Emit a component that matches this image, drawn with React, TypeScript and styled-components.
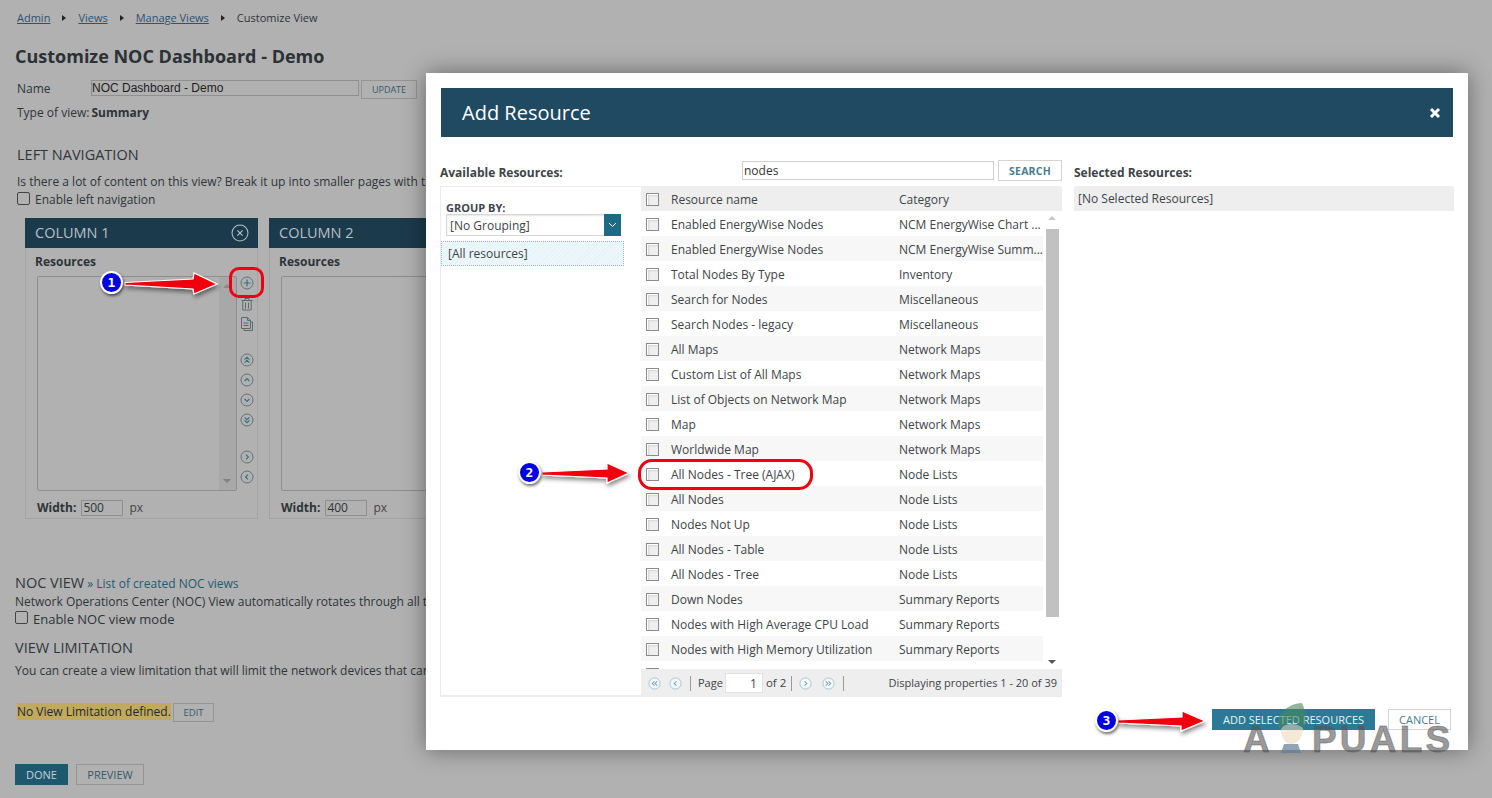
import React from "react";
import styled, { createGlobalStyle } from "styled-components";

const Global = createGlobalStyle`
  html, body { margin: 0; padding: 0; background: #b1b1b1; }
  * { box-sizing: border-box; }
`;

const Page = styled.div`
  position: relative;
  width: 1492px;
  height: 798px;
  overflow: hidden;
  background: #b1b1b1;
  color: #2e3438;
  font: 12px/16px "Open Sans", sans-serif;
`;

const Back = styled.div`
  display: flex;
  flex-direction: column;
  width: 1492px;
  padding: 10px 0 0 17px;
`;

const Crumbs = styled.nav`
  display: flex;
  align-items: center;
  height: 16px;
  font-size: 11px;
`;
const CrumbLink = styled.a`
  color: #2f5270;
  text-decoration: underline;
`;
const CrumbArrow = styled.span`
  width: 0;
  height: 0;
  margin: 0 12px 0 12px;
  border-left: 4px solid #222;
  border-top: 3px solid transparent;
  border-bottom: 3px solid transparent;
`;

const Title = styled.h1`
  margin: 18px 0 0 -2px;
  font-size: 18px;
  line-height: 24px;
  font-weight: 700;
  color: #2b3135;
`;

const NameRow = styled.div`
  display: flex;
  align-items: flex-start;
  height: 19px;
  margin-top: 12px;
`;
const NameLabel = styled.span`
  width: 74px;
  line-height: 17px;
`;
const NameInput = styled.div`
  width: 268px;
  height: 16px;
  border: 1px solid #8f8f8f;
  font: 12px/14px "Liberation Sans", sans-serif;
  color: #1d1d1d;
  white-space: nowrap;
`;
const GhostButton = styled.div<{ $w: number; $h: number; $size: number }>`
  display: flex;
  align-items: center;
  justify-content: center;
  width: ${(p) => p.$w}px;
  height: ${(p) => p.$h}px;
  flex: none;
  border: 1px solid #949494;
  font-size: ${(p) => p.$size}px;
  color: #34596b;
`;
const UpdateButton = styled(GhostButton)`
  margin-left: 2px;
`;
const TypeRow = styled.div`
  margin-top: 6px;
  height: 16px;
  white-space: nowrap;
`;
const Strong = styled.b`
  font-weight: 700;
  margin-left: 2px;
`;
const SectionTitle = styled.h2<{ $top: number; $left?: number }>`
  margin: ${(p) => p.$top}px 0 0 ${(p) => p.$left ?? 0}px;
  font-size: 14.5px;
  line-height: 20px;
  font-weight: 400;
  color: #30363a;
  white-space: nowrap;
`;
const Para = styled.p<{ $top: number; $left?: number }>`
  margin: ${(p) => p.$top}px 0 0 ${(p) => p.$left ?? 0}px;
  white-space: nowrap;
  height: 16px;
`;
const CheckRow = styled.label<{ $left?: number; $size?: number; $top?: number }>`
  display: flex;
  align-items: center;
  gap: 5px;
  height: 16px;
  margin: ${(p) => p.$top ?? 2}px 0 0 ${(p) => p.$left ?? 0}px;
  font-size: ${(p) => p.$size ?? 12}px;
  white-space: nowrap;
`;
const PlainCheck = styled.span`
  width: 13px;
  height: 13px;
  border: 1px solid #444;
  border-radius: 2px;
  margin-top: -3px;
`;

const Columns = styled.div`
  display: flex;
  gap: 11px;
  margin: 10px 0 0 8px;
`;
const Column = styled.section`
  width: 233px;
  height: 301px;
  flex: none;
  border: 1px solid #a3a3a3;
  border-top: 0;
`;
const ColumnHead = styled.header`
  display: flex;
  align-items: center;
  justify-content: space-between;
  height: 30px;
  margin: 0 -1px;
  padding: 0 9px 0 10px;
  background: #1b3a4c;
  color: #b5c0c6;
  font-size: 14.5px;
`;
const ColumnLabel = styled.div`
  margin: 6px 0 0 9px;
  font-weight: 700;
  height: 16px;
`;
const ColumnBody = styled.div`
  display: flex;
  margin: 6px 0 0 11px;
`;
const ListBox = styled.div`
  display: flex;
  justify-content: flex-end;
  width: 200px;
  height: 215px;
  border: 1px solid #8e8e8e;
  border-radius: 2px;
`;
const ListScroll = styled.div`
  position: relative;
  width: 17px;
  background: #a8a8a8;
`;
const ScrollTri = styled.span<{ $down?: boolean; $color?: string; $pos: number; $left?: number }>`
  position: absolute;
  left: ${(p) => p.$left ?? 4}px;
  ${(p) => (p.$down ? `bottom: ${p.$pos}px;` : `top: ${p.$pos}px;`)}
  width: 0;
  height: 0;
  border-left: 4px solid transparent;
  border-right: 4px solid transparent;
  ${(p) => (p.$down ? "border-top" : "border-bottom")}: 4px solid ${(p) => p.$color ?? "#808080"};
`;
const IconRail = styled.div`
  display: flex;
  flex-direction: column;
  align-items: center;
  width: 19px;
`;
const RailIcon = styled.svg<{ $top?: number }>`
  display: block;
  width: 14px;
  height: 14px;
  margin-top: ${(p) => p.$top ?? 0}px;
  flex: none;
`;
const CloseRound = styled.svg`
  display: block;
  width: 18px;
  height: 18px;
  flex: none;
`;
const WidthRow = styled.div`
  display: flex;
  align-items: center;
  height: 18px;
  margin: 8px 0 0 11px;
  white-space: nowrap;
`;
const WidthLabel = styled.b`
  font-weight: 700;
  margin-right: 5px;
`;
const WidthInput = styled.div`
  width: 42px;
  height: 16px;
  padding-left: 1px;
  border: 1px solid #8e8e8e;
  line-height: 14px;
`;
const Px = styled.span`
  margin-left: 6px;
  color: #444;
`;

const NocTitle = styled.div`
  display: flex;
  align-items: baseline;
  margin: 54px 0 0 -2px;
  height: 20px;
  font-size: 14.5px;
  line-height: 20px;
  color: #30363a;
`;
const NocLink = styled.a`
  margin-left: 3px;
  font-size: 12px;
  color: #235a70;
`;
const LimitRow = styled.div`
  display: flex;
  align-items: flex-start;
  margin-top: 24px;
  height: 20px;
`;
const LimitTag = styled.span`
  display: block;
  width: 154px;
  height: 17px;
  background: #c1aa60;
  line-height: 17px;
  color: #23282a;
  white-space: nowrap;
  flex: none;
`;
const EditButton = styled(GhostButton)`
  margin: 0 0 0 2px;
`;
const BackActions = styled.div`
  display: flex;
  gap: 8px;
  margin: 41px 0 0 -2px;
`;
const DoneButton = styled.div`
  display: flex;
  align-items: center;
  justify-content: center;
  width: 53px;
  height: 21px;
  background: #1e586f;
  color: #c5d2d8;
  font-size: 11px;
`;

/* Modal */
const Modal = styled.div`
  position: absolute;
  left: 426px;
  top: 73px;
  width: 1042px;
  height: 677px;
  padding: 15px 0 0 14px;
  background: #fff;
  box-shadow: 0 0 22px rgba(0, 0, 0, 0.42);
  color: #3d4448;
`;
const ModalHead = styled.header`
  display: flex;
  align-items: center;
  justify-content: space-between;
  width: 1012px;
  height: 49px;
  margin-left: 1px;
  padding: 0 12px 0 21px;
  background: #204a62;
  color: #fff;
  font-size: 20px;
`;
const CloseGlyph = styled.svg`
  display: block;
  width: 12px;
  height: 12px;
`;
const ModalBody = styled.div`
  display: flex;
  gap: 12px;
  margin-top: 23px;
`;
const Available = styled.div`
  width: 622px;
  flex: none;
`;
const TopBar = styled.div`
  display: flex;
  align-items: flex-start;
  height: 26px;
`;
const FieldLabel = styled.b`
  display: block;
  font-weight: 700;
  font-size: 12px;
  line-height: 16px;
  padding-top: 5px;
  color: #3d4448;
`;
const BarLabel = styled(FieldLabel)`
  width: 302px;
  flex: none;
`;
const SearchInput = styled.div`
  width: 252px;
  height: 19px;
  margin-top: 1px;
  border: 1px solid #cfcfcf;
  padding-left: 1px;
  font-size: 12px;
  line-height: 18px;
  color: #333;
`;
const SearchButton = styled.div`
  display: flex;
  align-items: center;
  justify-content: center;
  width: 64px;
  height: 21px;
  margin-left: 4px;
  border: 1px solid #d4d4d4;
  font-size: 10.5px;
  font-weight: 700;
  letter-spacing: 0.2px;
  color: #4a7c8e;
`;
const Panel = styled.div`
  display: flex;
  height: 511px;
  border-bottom: 1px solid #ececec;
`;
const Side = styled.aside`
  width: 201px;
  flex: none;
  padding: 14px 0 0 0;
  border: 1px solid #ececec;
  border-right: 0;
`;
const SideLabel = styled.b`
  display: block;
  margin-left: 5px;
  font-size: 11px;
  line-height: 13px;
  font-weight: 700;
  color: #3d4448;
`;
const GroupSelect = styled.div`
  display: flex;
  justify-content: space-between;
  width: 175px;
  height: 22px;
  margin: 0 0 0 5px;
  border: 1px solid #d6d6d6;
  box-shadow: inset 0 1px 2px rgba(0, 0, 0, 0.1);
  font-size: 12px;
  line-height: 21px;
  padding-left: 3px;
`;
const SelectCaret = styled.span`
  display: flex;
  align-items: center;
  justify-content: center;
  width: 17px;
  background: #1e6a85;
  margin: -1px -1px -1px 0;
`;
const AllRes = styled.div`
  width: 183px;
  height: 25px;
  margin-top: 5px;
  padding-left: 6px;
  font-size: 12px;
  line-height: 24px;
  border: 1px dotted #86c3d2;
  background: repeating-linear-gradient(135deg, #e4f3f7 0 1px, #edf7fa 1px 3px);
`;
const GridWrap = styled.div`
  display: flex;
  flex-direction: column;
  width: 421px;
  flex: none;
`;
const GridHead = styled.div`
  display: grid;
  grid-template-columns: 25px 228px 1fr;
  align-items: center;
  height: 25px;
  background: #eeeeee;
  padding: 2px 0 0 5px;
  font-size: 12px;
`;
const GridMain = styled.div`
  display: flex;
  height: 459px;
  overflow: hidden;
`;
const Rows = styled.div`
  width: 402px;
  flex: none;
`;
const Row = styled.div<{ $odd: boolean }>`
  display: grid;
  grid-template-columns: 25px 228px 1fr;
  align-items: center;
  height: 25px;
  padding: 2px 0 0 5px;
  background: ${(p) => (p.$odd ? "#f7f7f7" : "#fff")};
  font-size: 12px;
  white-space: nowrap;
`;
const Cell = styled.span`
  padding-top: 1px;
  line-height: 16px;
`;
const BoxCheck = styled.span`
  display: block;
  width: 13px;
  height: 13px;
  border: 1px solid #8b8b8b;
  background: #efefef;
  box-shadow: inset 1px 1px 0 #fff, inset 2px 2px 2px #d4d4d4;
`;
const Scroll = styled.div`
  position: relative;
  flex: 1;
`;
const Thumb = styled.div`
  position: absolute;
  left: 3px;
  top: 18px;
  width: 13px;
  height: 388px;
  background: #c1c1c1;
`;
const GridFoot = styled.div`
  display: flex;
  align-items: center;
  height: 27px;
  padding: 1px 5px 0 7px;
  background: #eeeeee;
  font-size: 11px;
  white-space: nowrap;
`;
const PageIcon = styled.svg<{ $gap?: number }>`
  display: block;
  width: 13px;
  height: 13px;
  margin-right: ${(p) => p.$gap ?? 8}px;
  flex: none;
`;
const Sep = styled.span<{ $gap?: number }>`
  width: 1px;
  height: 15px;
  margin-right: ${(p) => p.$gap ?? 7}px;
  background: #9a9a9a;
  flex: none;
`;
const PageInput = styled.div`
  width: 38px;
  height: 20px;
  margin: 0 3px 0 2px;
  padding-right: 5px;
  background: #fff;
  border: 1px solid #e2e2e2;
  text-align: right;
  font-size: 12px;
  line-height: 20px;
`;
const PageOf = styled.span`
  margin-right: 5px;
  font-size: 11.5px;
`;
const Showing = styled.span`
  margin-left: auto;
`;
const Selected = styled.div`
  width: 380px;
  flex: none;
`;
const SelectedBand = styled.div`
  height: 25px;
  margin-top: 5px;
  padding-left: 4px;
  background: #eeeeee;
  font-size: 12px;
  line-height: 25px;
`;
const ModalFoot = styled.div`
  display: flex;
  gap: 13px;
  margin: 12px 0 0 772px;
`;
const AddButton = styled.div`
  display: flex;
  align-items: center;
  justify-content: center;
  width: 163px;
  height: 21px;
  background: #2a7a96;
  color: #e9f2f5;
  font-size: 11px;
`;
const CancelButton = styled.div`
  display: flex;
  align-items: center;
  justify-content: center;
  width: 63px;
  height: 21px;
  border: 1px solid #d4d4d4;
  color: #4a7c8e;
  font-size: 11px;
`;

/* Overlays */
const Canvas = styled.svg`
  position: absolute;
  left: 0;
  top: 0;
  width: 1492px;
  height: 798px;
  pointer-events: none;
`;
const Badge = styled.div<{ $x: number; $y: number }>`
  position: absolute;
  left: ${(p) => p.$x - 12}px;
  top: ${(p) => p.$y - 12}px;
  display: flex;
  align-items: center;
  justify-content: center;
  width: 23px;
  height: 23px;
  border-radius: 50%;
  background: #0000e0;
  border: 2px solid #fff;
  box-shadow: 1px 2px 3px rgba(0, 0, 0, 0.55);
  color: #fff;
  font: 700 13px/1 "DejaVu Sans Mono", monospace;
`;
const Ring = styled.div<{ $x: number; $y: number; $w: number; $h: number; $r: number }>`
  position: absolute;
  left: ${(p) => p.$x}px;
  top: ${(p) => p.$y}px;
  width: ${(p) => p.$w}px;
  height: ${(p) => p.$h}px;
  border: 3px solid #ee0010;
  border-radius: ${(p) => p.$r}px;
`;
const Mark = styled.div`
  position: absolute;
  left: 1243px;
  top: 705px;
  display: flex;
  align-items: flex-end;
  height: 50px;
  pointer-events: none;
`;
const MarkText = styled.span`
  font: 700 37px/31px "Liberation Sans", sans-serif;
  letter-spacing: 3.2px;
  color: rgba(85, 85, 85, 0.6);
  -webkit-text-stroke: 1px rgba(85, 85, 85, 0.45);
`;
const MarkHead = styled.svg`
  display: block;
  width: 42px;
  height: 50px;
  margin: 0 0 2px -3px;
  flex: none;
`;

const resources: [string, string][] = [
  ["Enabled EnergyWise Nodes", "NCM EnergyWise Chart ..."],
  ["Enabled EnergyWise Nodes", "NCM EnergyWise Summ..."],
  ["Total Nodes By Type", "Inventory"],
  ["Search for Nodes", "Miscellaneous"],
  ["Search Nodes - legacy", "Miscellaneous"],
  ["All Maps", "Network Maps"],
  ["Custom List of All Maps", "Network Maps"],
  ["List of Objects on Network Map", "Network Maps"],
  ["Map", "Network Maps"],
  ["Worldwide Map", "Network Maps"],
  ["All Nodes - Tree (AJAX)", "Node Lists"],
  ["All Nodes", "Node Lists"],
  ["Nodes Not Up", "Node Lists"],
  ["All Nodes - Table", "Node Lists"],
  ["All Nodes - Tree", "Node Lists"],
  ["Down Nodes", "Summary Reports"],
  ["Nodes with High Average CPU Load", "Summary Reports"],
  ["Nodes with High Memory Utilization", "Summary Reports"],
  ["Nodes with High Packet Loss", "Summary Reports"],
];

const glyphs: Record<string, string> = {
  plus: "M7 3.6V10.4M3.6 7H10.4",
  close: "M5 5L9 9M9 5L5 9",
  up: "M4.6 8L7 5.6L9.4 8",
  down: "M4.6 6L7 8.4L9.4 6",
  top: "M4.6 6.6L7 4.4L9.4 6.6M4.6 9.6L7 7.4L9.4 9.6",
  bottom: "M4.6 4.4L7 6.6L9.4 4.4M4.6 7.4L7 9.6L9.4 7.4",
  right: "M6 4.6L8.4 7L6 9.4",
  left: "M8 4.6L5.6 7L8 9.4",
  first: "M7 4.6L4.6 7L7 9.4M10 4.6L7.6 7L10 9.4",
  prev: "M8 4.6L5.6 7L8 9.4",
  next: "M6 4.6L8.4 7L6 9.4",
  last: "M4 4.6L6.4 7L4 9.4M7 4.6L9.4 7L7 9.4",
};

function Round({ name, top }: { name: string; top?: number }) {
  return (
    <RailIcon viewBox="0 0 14 14" $top={top}>
      <circle cx="7" cy="7" r="6" fill="none" stroke="#667077" strokeWidth="1" />
      <path d={glyphs[name]} fill="none" stroke="#2f7286" strokeWidth="1.2" />
    </RailIcon>
  );
}

function Trash() {
  return (
    <RailIcon viewBox="0 0 14 14" $top={7}>
      <path d="M1.5 3.5H12.5M5 3V1.5H9V3M2.8 4V13H11.2V4M5.5 5.5V11.5M8.5 5.5V11.5" fill="none" stroke="#5f6a70" strokeWidth="1" />
    </RailIcon>
  );
}

function Doc() {
  return (
    <RailIcon viewBox="0 0 14 14" $top={6}>
      <path d="M1.5 .5H7.5L10.5 3.5V11.5H1.5ZM7.5 .5V3.5H10.5M10.5 5H12.5V13.5H4V11.5" fill="none" stroke="#5f6a70" strokeWidth="1" />
      <path d="M3.5 6H8.5M3.5 8.5H8.5" stroke="#2f7286" strokeWidth="1" />
    </RailIcon>
  );
}

function PageBtn({ name, gap }: { name: string; gap?: number }) {
  return (
    <PageIcon viewBox="0 0 14 14" $gap={gap}>
      <circle cx="7" cy="7" r="6" fill="#f3f8fa" stroke="#a3c3cf" strokeWidth="1" />
      <path d={glyphs[name]} fill="none" stroke="#6ea3b6" strokeWidth="1.1" />
    </PageIcon>
  );
}

function ResourceColumn({ title, width, active }: { title: string; width: string; active?: boolean }) {
  return (
    <Column>
      <ColumnHead>
        {title}
        {active && (
          <CloseRound viewBox="0 0 14 14">
            <circle cx="7" cy="7" r="6.2" fill="none" stroke="#b5c0c6" strokeWidth="0.8" />
            <path d={glyphs.close} stroke="#b5c0c6" strokeWidth="0.9" />
          </CloseRound>
        )}
      </ColumnHead>
      <ColumnLabel>Resources</ColumnLabel>
      <ColumnBody>
        <ListBox>
          <ListScroll>
            <ScrollTri $pos={7} $color="#8a8a8a" />
            <ScrollTri $down $pos={7} />
          </ListScroll>
        </ListBox>
        <IconRail>
          <Round name="plus" top={0} />
          <Trash />
          <Doc />
          <Round name="top" top={22} />
          <Round name="up" top={6} />
          <Round name="down" top={6} />
          <Round name="bottom" top={6} />
          <Round name="right" top={23} />
          <Round name="left" top={6} />
        </IconRail>
      </ColumnBody>
      <WidthRow>
        <WidthLabel>Width:</WidthLabel>
        <WidthInput>{width}</WidthInput>
        <Px>px</Px>
      </WidthRow>
    </Column>
  );
}

export default function App() {
  return (
    <Page>
      <Global />
      <Back>
        <Crumbs>
          <CrumbLink>Admin</CrumbLink>
          <CrumbArrow />
          <CrumbLink>Views</CrumbLink>
          <CrumbArrow />
          <CrumbLink>Manage Views</CrumbLink>
          <CrumbArrow />
          <span>Customize View</span>
        </Crumbs>
        <Title>Customize NOC Dashboard - Demo</Title>
        <NameRow>
          <NameLabel>Name</NameLabel>
          <NameInput>NOC Dashboard - Demo</NameInput>
          <UpdateButton $w={56} $h={19} $size={9}>UPDATE</UpdateButton>
        </NameRow>
        <TypeRow>
          Type of view:<Strong>Summary</Strong>
        </TypeRow>
        <SectionTitle $top={24}>LEFT NAVIGATION</SectionTitle>
        <Para $top={9}>Is there a lot of content on this view? Break it up into smaller pages with tabs.</Para>
        <CheckRow>
          <PlainCheck />
          Enable left navigation
        </CheckRow>
        <Columns>
          <ResourceColumn title="COLUMN 1" width="500" active />
          <ResourceColumn title="COLUMN 2" width="400" />
        </Columns>
        <NocTitle>
          NOC VIEW
          <NocLink>» List of created NOC views</NocLink>
        </NocTitle>
        <Para $top={1} $left={-2}>Network Operations Center (NOC) View automatically rotates through all tabs.</Para>
        <CheckRow $left={-2} $size={13} $top={1}>
          <PlainCheck />
          Enable NOC view mode
        </CheckRow>
        <SectionTitle $top={11} $left={-2}>VIEW LIMITATION</SectionTitle>
        <Para $top={5} $left={-2}>You can create a view limitation that will limit the network devices that can be seen.</Para>
        <LimitRow>
          <LimitTag>No View Limitation defined.</LimitTag>
          <EditButton $w={41} $h={19} $size={9.5}>EDIT</EditButton>
        </LimitRow>
        <BackActions>
          <DoneButton>DONE</DoneButton>
          <GhostButton $w={68} $h={21} $size={11}>PREVIEW</GhostButton>
        </BackActions>
      </Back>

      <Modal>
        <ModalHead>
          Add Resource
          <CloseGlyph viewBox="0 0 12 12">
            <path d="M2 2L10 10M10 2L2 10" stroke="#fff" strokeWidth="3" />
          </CloseGlyph>
        </ModalHead>
        <ModalBody>
          <Available>
            <TopBar>
              <BarLabel>Available Resources:</BarLabel>
              <SearchInput>nodes</SearchInput>
              <SearchButton>SEARCH</SearchButton>
            </TopBar>
            <Panel>
              <Side>
                <SideLabel>GROUP BY:</SideLabel>
                <GroupSelect>
                  [No Grouping]
                  <SelectCaret>
                    <svg width="9" height="6" viewBox="0 0 9 6">
                      <path d="M1 1L4.5 4.5L8 1" fill="none" stroke="#fff" strokeWidth="1" />
                    </svg>
                  </SelectCaret>
                </GroupSelect>
                <AllRes>[All resources]</AllRes>
              </Side>
              <GridWrap>
                <GridHead>
                  <BoxCheck />
                  <Cell>Resource name</Cell>
                  <Cell>Category</Cell>
                </GridHead>
                <GridMain>
                  <Rows>
                    {resources.map(([name, cat], i) => (
                      <Row key={i} $odd={i % 2 === 1}>
                        <BoxCheck />
                        <Cell>{name}</Cell>
                        <Cell>{cat}</Cell>
                      </Row>
                    ))}
                  </Rows>
                  <Scroll>
                    <ScrollTri $pos={5} $left={5} $color="#c8c8c8" />
                    <Thumb />
                    <ScrollTri $down $pos={5} $left={5} $color="#555" />
                  </Scroll>
                </GridMain>
                <GridFoot>
                  <PageBtn name="first" />
                  <PageBtn name="prev" />
                  <Sep />
                  <span>Page</span>
                  <PageInput>1</PageInput>
                  <PageOf>of 2</PageOf>
                  <Sep $gap={7} />
                  <PageBtn name="next" gap={10} />
                  <PageBtn name="last" gap={8} />
                  <Sep />
                  <Showing>Displaying properties 1 - 20 of 39</Showing>
                </GridFoot>
              </GridWrap>
            </Panel>
          </Available>
          <Selected>
            <FieldLabel>Selected Resources:</FieldLabel>
            <SelectedBand>[No Selected Resources]</SelectedBand>
          </Selected>
        </ModalBody>
        <ModalFoot>
          <AddButton>ADD SELECTED RESOURCES</AddButton>
          <CancelButton>CANCEL</CancelButton>
        </ModalFoot>
      </Modal>

      <Mark>
        <MarkText>A</MarkText>
        <MarkHead viewBox="0 0 42 50">
          <path d="M8 26C6 12 16 1 32 0C36 8 36 16 35 24L22 18Z" fill="rgba(70,135,90,.6)" />
          <path d="M11 26C14 20 26 19 33 25C33 34 28 41 21 41C15 41 11 34 11 26Z" fill="rgba(235,215,180,.55)" />
          <path d="M14 41L28 41L31 50H11Z" fill="rgba(95,125,150,.7)" />
        </MarkHead>
        <MarkText>PUALS</MarkText>
      </Mark>

      <Canvas viewBox="0 0 1492 798">
        <defs>
          <filter id="arrowShadow" x="-10%" y="-40%" width="120%" height="190%">
            <feDropShadow dx="1" dy="3" stdDeviation="2" floodColor="#000" floodOpacity="0.45" />
          </filter>
        </defs>
        <g fill="#f00010" stroke="#fff" strokeWidth="1.2" filter="url(#arrowShadow)">
          <polygon points="125,282.5 193,279 194,273 217,284 194,294 193,289 125,285" />
          <polygon points="542,472 607,469 607,463 629,473 607,483 607,478 542,475" />
          <polygon points="1118,720 1182,717 1182,711 1205,721 1181,731 1181,726 1118,723" />
        </g>
      </Canvas>
      <Ring $x={229} $y={267} $w={35} $h={31} $r={10} />
      <Ring $x={638} $y={459} $w={175} $h={31} $r={14} />
      <Badge $x={112} $y={283}>1</Badge>
      <Badge $x={530} $y={473}>2</Badge>
      <Badge $x={1107} $y={721}>3</Badge>
    </Page>
  );
}
